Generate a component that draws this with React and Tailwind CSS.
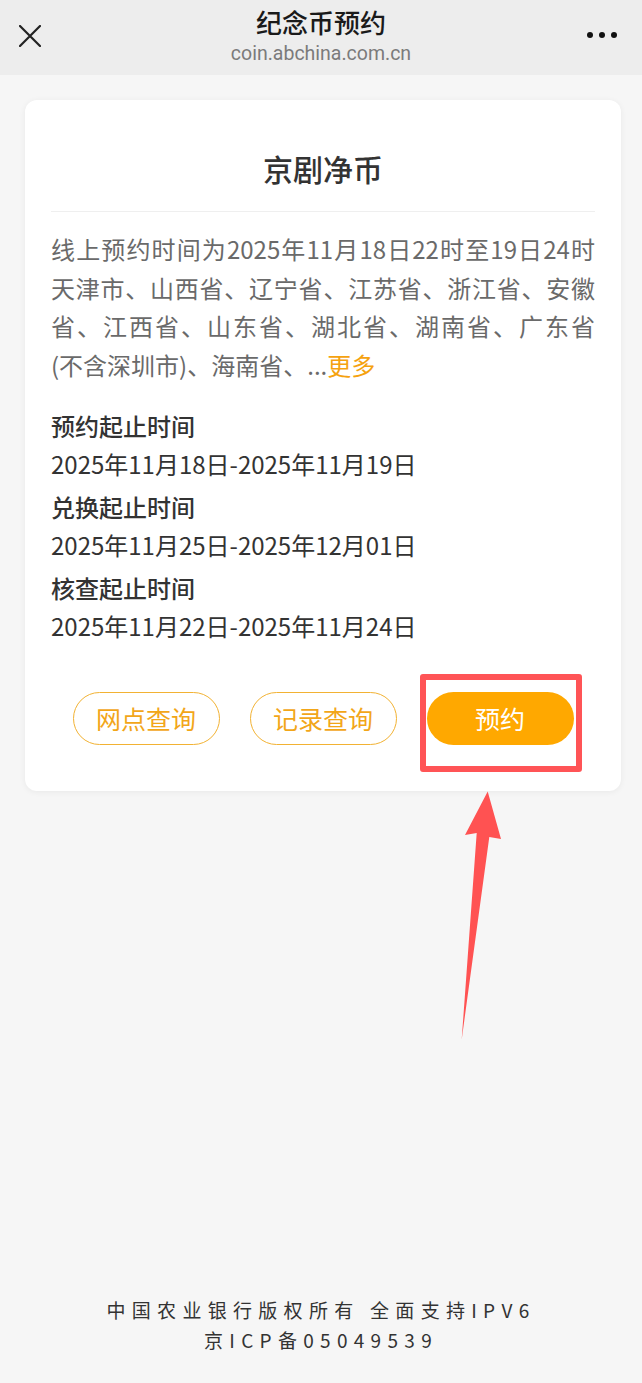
import React from "react";

export default function App() {
  const cjk = "font-['Noto_Sans_CJK_SC','Noto_Sans',sans-serif]";
  return (
    <div className={`relative h-[1383px] w-[642px] bg-[#f6f6f6] flex flex-col ${cjk}`}>
      {/* Header */}
      <div className="relative h-[75px] bg-[#ededed] flex flex-col items-center shrink-0">
        <div className="absolute left-[19px] top-[25px]">
          <svg width="22" height="22" viewBox="0 0 22 22">
            <path d="M1 1 L21 21 M21 1 L1 21" stroke="#222" strokeWidth="2.2" strokeLinecap="round" />
          </svg>
        </div>
        <div className="absolute left-[587px] top-[32px] flex gap-[6.5px]">
          <div className="w-[5.5px] h-[5.5px] rounded-full bg-[#111]" />
          <div className="w-[5.5px] h-[5.5px] rounded-full bg-[#111]" />
          <div className="w-[5.5px] h-[5.5px] rounded-full bg-[#111]" />
        </div>
        <div className="mt-[5px] text-[26px] leading-[34px] font-medium text-[#1a1a1a]">纪念币预约</div>
        <div className="mt-[3px] text-[19.5px] leading-[24px] text-[#7b7b7b] font-['Roboto',sans-serif]">coin.abchina.com.cn</div>
      </div>

      {/* Card */}
      <div className="mx-[25px] mt-[25px] w-[596px] bg-white rounded-[12px] shadow-[0_1px_6px_rgba(0,0,0,0.06)] px-[26px] pt-[48px] pb-[46px]">
        <div className="text-center text-[30px] leading-[40px] font-medium text-[#333]">京剧净币</div>
        <div className="mt-[23px] h-px bg-[#efefef]" />
        <div className="mt-[18px] text-[24px] leading-[38.5px] text-[#6a6a6a]">
          <div className="text-justify [text-align-last:justify] whitespace-nowrap">线上预约时间为2025年11月18日22时至19日24时</div>
          <div className="text-justify [text-align-last:justify] whitespace-nowrap">天津市、山西省、辽宁省、江苏省、浙江省、安徽</div>
          <div className="text-justify [text-align-last:justify] whitespace-nowrap">省、江西省、山东省、湖北省、湖南省、广东省</div>
          <div className="whitespace-nowrap">(不含深圳市)、海南省、...<span className="text-[#f5a20f]">更多</span></div>
        </div>

        <div className="mt-[23px] flex flex-col gap-[5px] text-[24px] leading-[38px] text-[#333]">
          <div>
            <div className="font-medium">预约起止时间</div>
            <div>2025年11月18日-2025年11月19日</div>
          </div>
          <div>
            <div className="font-medium">兑换起止时间</div>
            <div>2025年11月25日-2025年12月01日</div>
          </div>
          <div>
            <div className="font-medium">核查起止时间</div>
            <div>2025年11月22日-2025年11月24日</div>
          </div>
        </div>

        <div className="mt-[47px] flex justify-center gap-[30px]">
          <div className="w-[147px] h-[53px] rounded-full border border-[#f2b233] flex items-center justify-center text-[25px] text-[#f2a619]">网点查询</div>
          <div className="w-[147px] h-[53px] rounded-full border border-[#f2b233] flex items-center justify-center text-[25px] text-[#f2a619]">记录查询</div>
          <div className="relative w-[147px] h-[53px]">
            <div className="w-full h-full rounded-full bg-[#ffa800] flex items-center justify-center text-[25px] text-white">预约</div>
            <div className="absolute left-[-7px] right-[-8px] top-[-18px] bottom-[-27px] border-[6px] border-[#ff5456] rounded-[3px]" />
          </div>
        </div>
      </div>

      {/* Footer */}
      <div className="mt-auto pb-[28px] flex flex-col items-center text-[19px] leading-[30px] tracking-[6.3px] text-[#333]">
        <div>中国农业银行版权所有&nbsp;全面支持IPV6</div>
        <div>京ICP备05049539</div>
      </div>

      {/* Arrow annotation */}
      <svg className="absolute left-0 top-0 pointer-events-none" width="642" height="1383">
        <polygon points="487.7,791.5 501,839 489.3,837 461.7,1039.5 476.7,833 465,835" fill="#ff5252" />
      </svg>
    </div>
  );
}
